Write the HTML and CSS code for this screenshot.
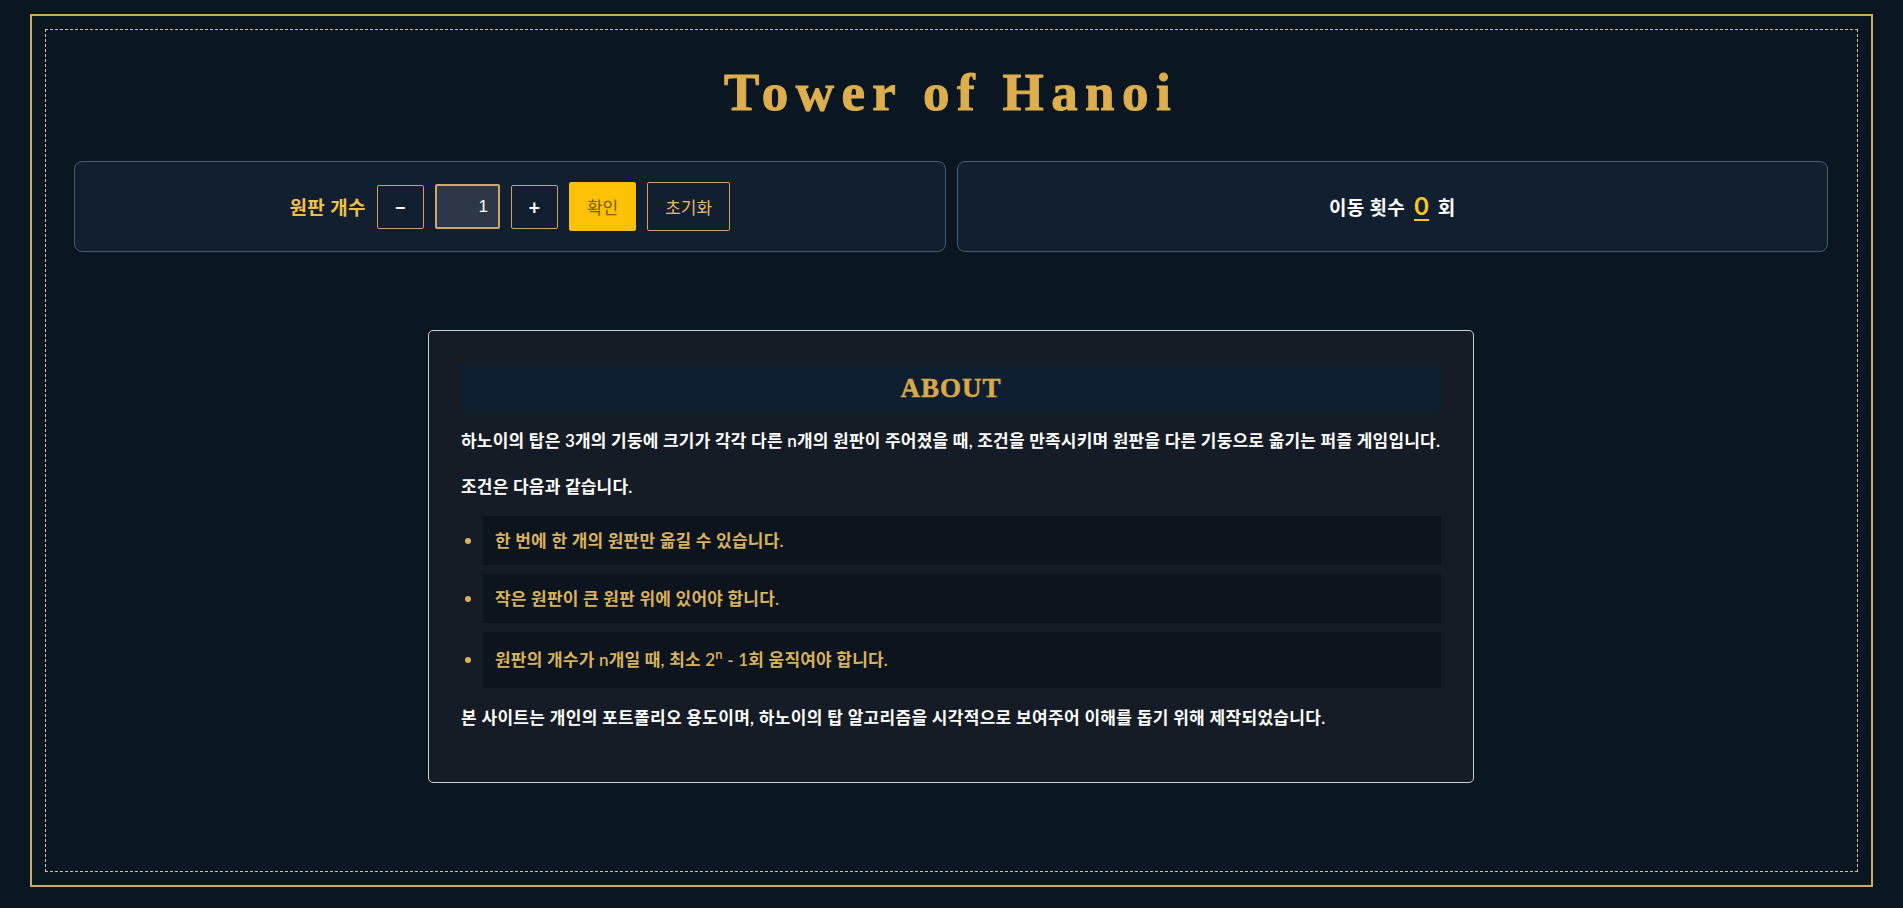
FILE: index.html
```html
<!DOCTYPE html>
<html lang="ko">
<head>
<meta charset="utf-8">
<title>Tower of Hanoi</title>
<link rel="stylesheet" href="styles.css">
</head>
<body>
<div class="frame">
  <div class="inner">
    <h1 class="title">Tower of Hanoi</h1>
    <div class="panels">
      <div class="panel">
        <span class="label">원판 개수</span>
        <button class="btn step">−</button>
        <input class="count" type="text" value="1">
        <button class="btn step">+</button>
        <button class="btn confirm">확인</button>
        <button class="btn reset">초기화</button>
      </div>
      <div class="panel">
        <span class="moves">이동 횟수</span>
        <span class="move-num">0</span>
        <span class="moves">회</span>
      </div>
    </div>
    <section class="about">
      <h2 class="about-title">ABOUT</h2>
      <p class="text">하노이의 탑은 3개의 기둥에 크기가 각각 다른 n개의 원판이 주어졌을 때, 조건을 만족시키며 원판을 다른 기둥으로 옮기는 퍼즐 게임입니다.</p>
      <p class="text cond">조건은 다음과 같습니다.</p>
      <ul class="rules">
        <li class="rule"><span class="rule-box">한 번에 한 개의 원판만 옮길 수 있습니다.</span></li>
        <li class="rule"><span class="rule-box">작은 원판이 큰 원판 위에 있어야 합니다.</span></li>
        <li class="rule"><span class="rule-box tall">원판의 개수가 n개일 때, 최소 2<sup>n</sup> - 1회 움직여야 합니다.</span></li>
      </ul>
      <p class="text last">본 사이트는 개인의 포트폴리오 용도이며, 하노이의 탑 알고리즘을 시각적으로 보여주어 이해를 돕기 위해 제작되었습니다.</p>
    </section>
  </div>
</div>
</body>
</html>
```
FILE: styles.css
```css
* { box-sizing: border-box; }

html, body {
  margin: 0;
  padding: 0;
  background: #0a1723;
}

body {
  font-family: Lato, "Noto Sans CJK KR", sans-serif;
  color: #ffffff;
}

.frame {
  margin: 14px 30px 0;
  height: 873px;
  border: 2px solid #cdaa63;
  padding: 13px;
}

.inner {
  height: 100%;
  border: 1px dashed #d6c391;
  padding: 0 29px 0 28px;
  display: flex;
  flex-direction: column;
}

.title {
  margin: 32px 0 0;
  text-align: center;
  font-family: "Liberation Serif", "Times New Roman", serif;
  font-weight: 700;
  font-size: 53px;
  line-height: 61px;
  letter-spacing: 7.4px;
  color: #dcae4e;
  -webkit-text-stroke: 1px #dcae4e;
}

.panels {
  margin-top: 38px;
  display: flex;
  gap: 11px;
}

.panel {
  flex: 1;
  height: 91px;
  background: #111f31;
  border: 1px solid #4b5b6e;
  border-radius: 8px;
  display: flex;
  align-items: center;
  justify-content: center;
  gap: 11px;
}

.label {
  font-size: 19px;
  font-weight: 700;
  letter-spacing: 0.4px;
  color: #f0c04c;
}

.btn {
  font-family: Lato, "Noto Sans CJK KR", sans-serif;
  background: transparent;
  border: 1px solid #c9a65e;
  border-radius: 2px;
  color: #ffffff;
  cursor: pointer;
}

.step {
  width: 47px;
  height: 44px;
  font-size: 20px;
  font-weight: 700;
  padding: 0;
}

.count {
  width: 65px;
  height: 45px;
  background: #2d3748;
  border: 2px solid #c9a96b;
  border-radius: 2px;
  color: #ffffff;
  text-align: right;
  padding: 0 10px;
  font-family: "Liberation Sans", Arial, sans-serif;
  font-size: 17px;
}

.confirm {
  height: 49px;
  padding: 0 17px;
  background: #ffc107;
  border-color: #ffc107;
  color: #7c5d10;
  font-size: 17px;
}

.reset {
  height: 49px;
  padding: 0 17px;
  color: #e2bd6a;
  font-size: 17px;
}

.moves {
  font-size: 19px;
  font-weight: 700;
  letter-spacing: 0.3px;
  color: #ffffff;
}

.move-num {
  font-size: 25px;
  font-weight: 700;
  color: #f6c623;
  line-height: 27px;
  border-bottom: 2px solid #f6c623;
  margin: 0 -2px;
}

.about {
  width: 1046px;
  margin: 78px auto 0;
  background: #151c25;
  border: 1px solid #cfcfcf;
  border-radius: 5px;
  padding: 33px 32px 51px;
}

.about-title {
  margin: 0;
  height: 47px;
  background: #0f1e31;
  border-radius: 5px;
  text-align: center;
  font-family: "Liberation Serif", "Times New Roman", serif;
  font-weight: 700;
  font-size: 27px;
  line-height: 48px;
  letter-spacing: 1px;
  color: #d8a948;
  -webkit-text-stroke: 0.5px #d8a948;
}

.text {
  margin: 17px 0 0;
  font-size: 17px;
  font-weight: 600;
  letter-spacing: 0.2px;
  line-height: 26px;
  color: #ffffff;
}

.cond {
  margin-top: 20px;
}

.rules {
  list-style: none;
  margin: 16px 0 0;
  padding: 0;
  display: flex;
  flex-direction: column;
  gap: 9px;
}

.rule {
  display: flex;
  align-items: center;
}

.rule::before {
  content: "";
  width: 6px;
  height: 6px;
  border-radius: 50%;
  background: #d8b25e;
  margin: 0 12px 0 4px;
  flex: none;
}

.rule-box {
  flex: 1;
  background: #0c141e;
  padding: 12px;
  font-size: 17px;
  font-weight: 600;
  letter-spacing: 0.2px;
  line-height: 25px;
  color: #d9b25e;
}

.rule-box.tall {
  padding: 15px 12px 16px;
}

.rule-box sup {
  font-size: 13px;
  line-height: 0;
  vertical-align: 7px;
}

.last {
  margin-top: 17px;
  letter-spacing: 0.3px;
}
```
